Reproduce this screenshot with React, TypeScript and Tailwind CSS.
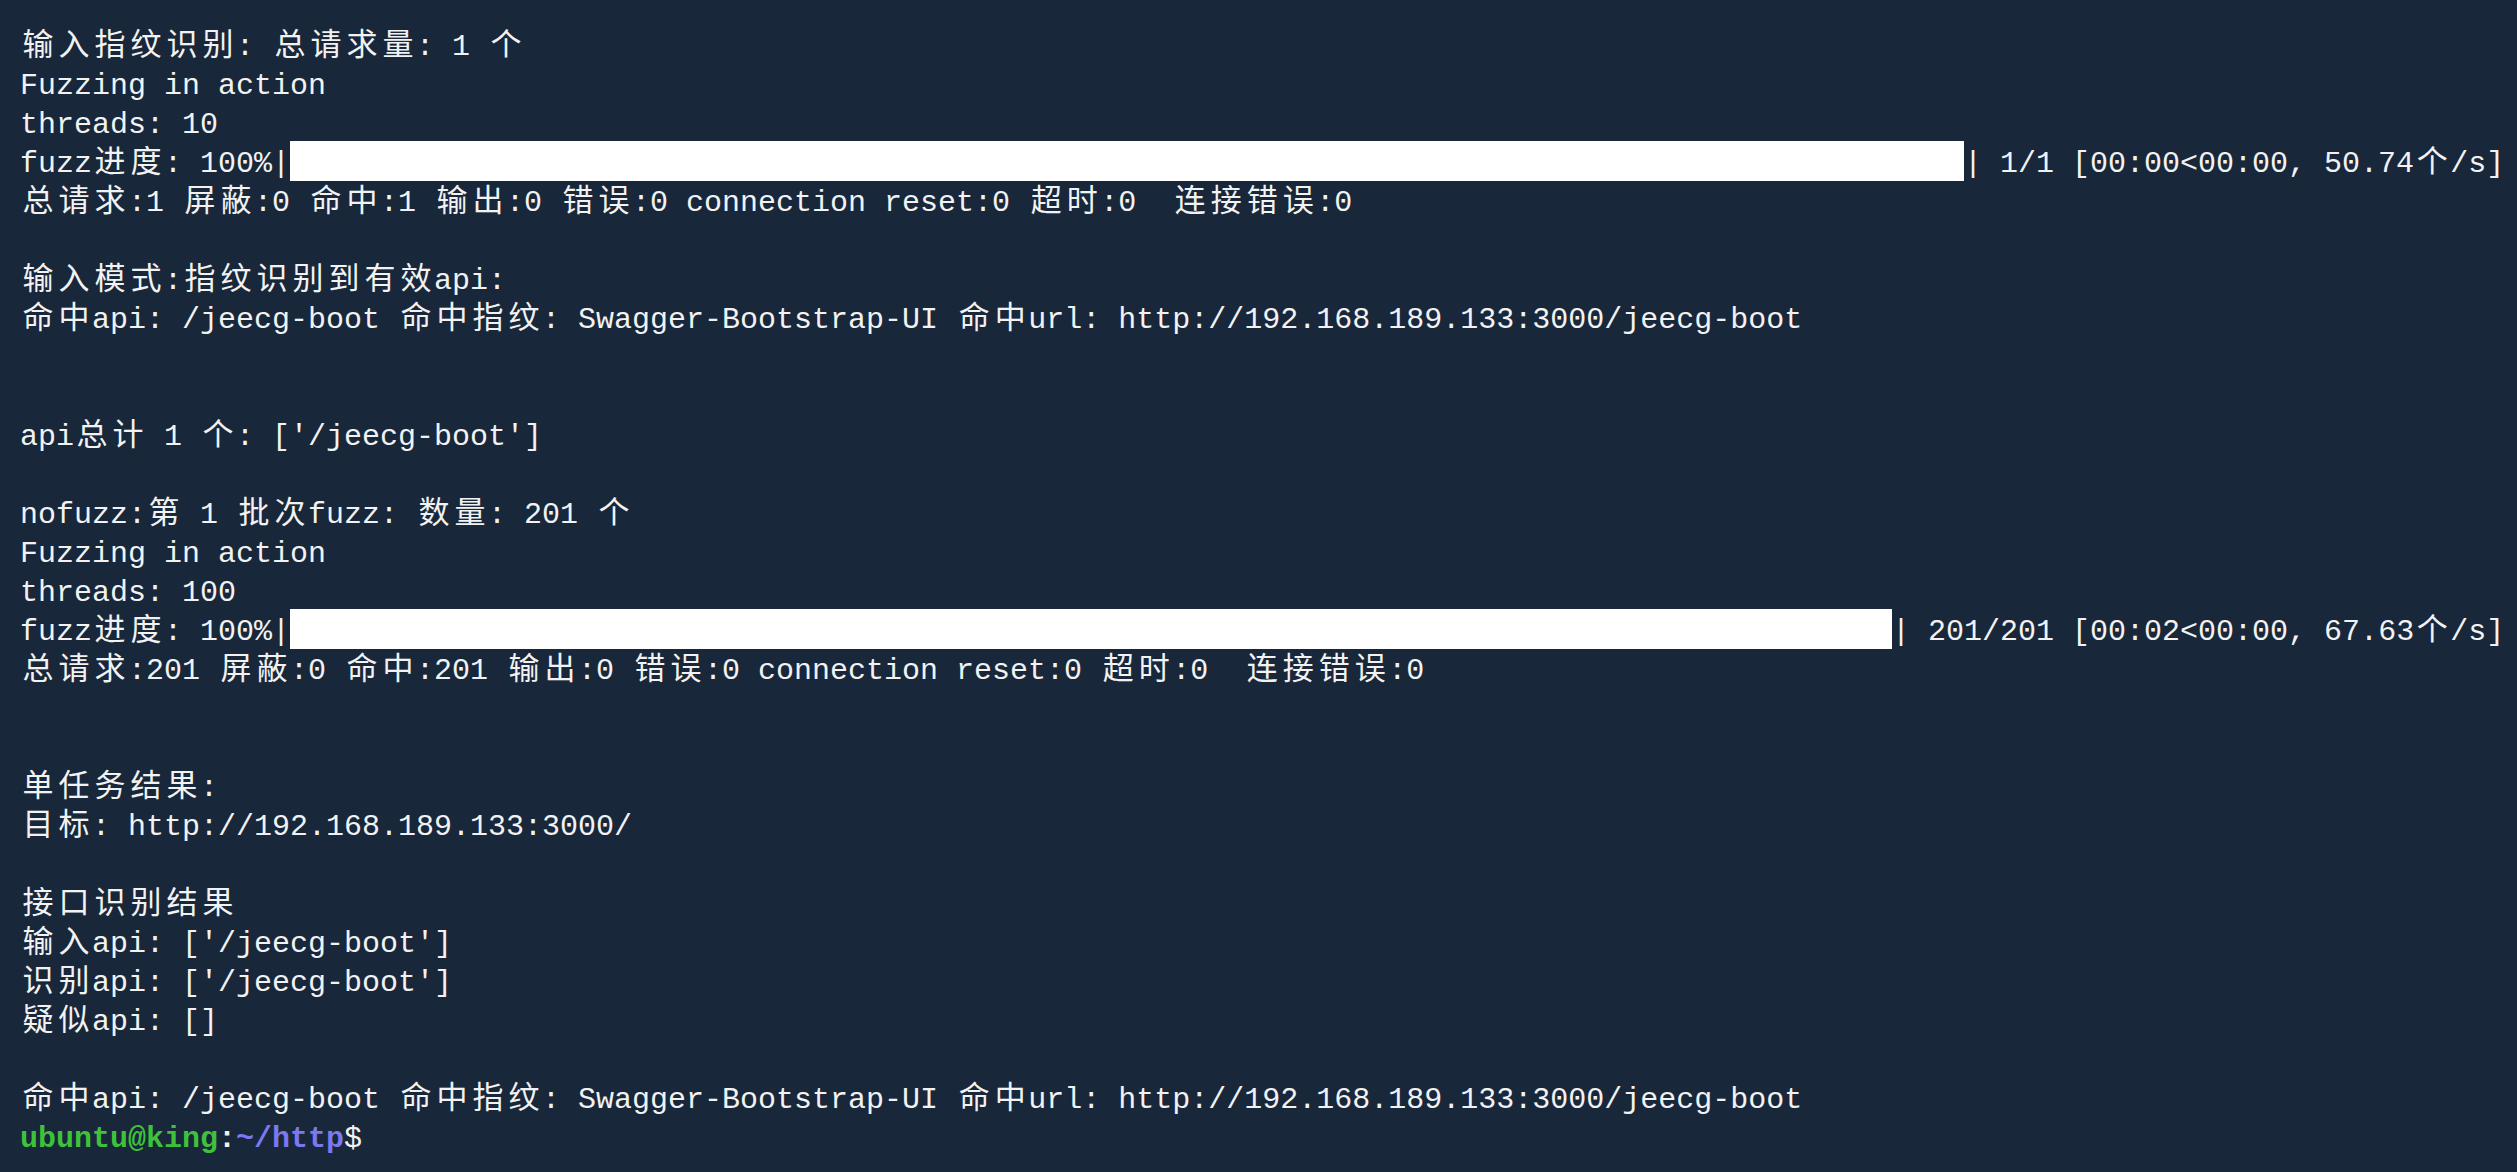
import { ReactNode } from "react";

const isWide = (ch: string) => (ch.codePointAt(0) ?? 0) >= 0x2e80;

// renders a terminal line: wide (CJK) chars take two cells
const Txt = ({ s }: { s: string }) => {
  const out: ReactNode[] = [];
  let run = "";
  Array.from(s).forEach((ch, i) => {
    if (isWide(ch)) {
      if (run) out.push(run);
      run = "";
      out.push(
        <span
          key={i}
          className="inline-block w-[36px] text-center text-[31px] leading-[27px] font-['Noto_Sans_CJK_SC',sans-serif]"
        >
          {ch}
        </span>
      );
    } else {
      run += ch;
    }
  });
  if (run) out.push(run);
  return <>{out}</>;
};

const Line = ({ children }: { children?: ReactNode }) => (
  <div className="h-[39px] leading-[39px] whitespace-pre">{children}</div>
);

const Bar = ({ cells }: { cells: "93" | "89" }) => (
  <span
    className={
      "inline-block h-[40px] -mt-[4px] align-top bg-white " +
      (cells === "93" ? "w-[1674px]" : "w-[1602px]")
    }
  />
);

const hit =
  "命中api: /jeecg-boot 命中指纹: Swagger-Bootstrap-UI 命中url: http://192.168.189.133:3000/jeecg-boot";

export default function App() {
  return (
    <div className="min-h-screen w-full bg-[#18273a] text-[#f2f2f2] font-['Liberation_Mono','Noto_Sans_CJK_SC',monospace] text-[30px] pl-[20px] pt-[28px]">
      <Line><Txt s="输入指纹识别: 总请求量: 1 个" /></Line>
      <Line>Fuzzing in action</Line>
      <Line>threads: 10</Line>
      <Line>
        <Txt s="fuzz进度: 100%|" />
        <Bar cells="93" />
        <Txt s="| 1/1 [00:00<00:00, 50.74个/s]" />
      </Line>
      <Line><Txt s="总请求:1 屏蔽:0 命中:1 输出:0 错误:0 connection reset:0 超时:0  连接错误:0" /></Line>
      <Line />
      <Line><Txt s="输入模式:指纹识别到有效api:" /></Line>
      <Line><Txt s={hit} /></Line>
      <Line />
      <Line />
      <Line><Txt s="api总计 1 个: ['/jeecg-boot']" /></Line>
      <Line />
      <Line><Txt s="nofuzz:第 1 批次fuzz: 数量: 201 个" /></Line>
      <Line>Fuzzing in action</Line>
      <Line>threads: 100</Line>
      <Line>
        <Txt s="fuzz进度: 100%|" />
        <Bar cells="89" />
        <Txt s="| 201/201 [00:02<00:00, 67.63个/s]" />
      </Line>
      <Line><Txt s="总请求:201 屏蔽:0 命中:201 输出:0 错误:0 connection reset:0 超时:0  连接错误:0" /></Line>
      <Line />
      <Line />
      <Line><Txt s="单任务结果:" /></Line>
      <Line><Txt s="目标: http://192.168.189.133:3000/" /></Line>
      <Line />
      <Line><Txt s="接口识别结果" /></Line>
      <Line><Txt s="输入api: ['/jeecg-boot']" /></Line>
      <Line><Txt s="识别api: ['/jeecg-boot']" /></Line>
      <Line><Txt s="疑似api: []" /></Line>
      <Line />
      <Line><Txt s={hit} /></Line>
      <Line>
        <span className="font-bold text-[#3ec23a]">ubuntu@king</span>
        <span className="font-bold">:</span>
        <span className="font-bold text-[#7b78f0]">~/http</span>
        $
      </Line>
    </div>
  );
}
